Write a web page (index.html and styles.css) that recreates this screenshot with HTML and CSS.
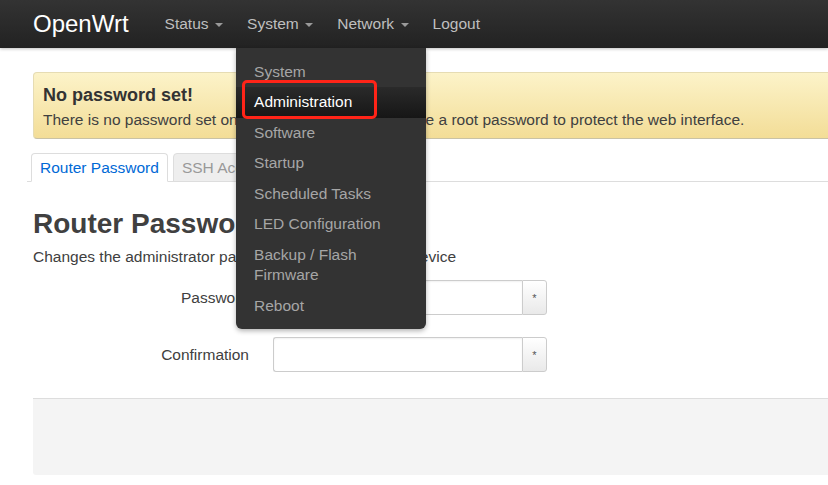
FILE: index.html
```html
<!DOCTYPE html>
<html>
<head>
<meta charset="utf-8">
<title>OpenWrt - Administration</title>
<link rel="stylesheet" href="styles.css">
</head>
<body>
<header class="navbar">
  <a class="brand" href="#">OpenWrt</a>
  <ul class="nav">
    <li class="nav-item"><a href="#">Status<span class="caret"></span></a></li>
    <li class="nav-item open"><a href="#">System<span class="caret"></span></a>
      <ul class="dropdown">
        <li><a href="#">System</a></li>
        <li class="active"><a href="#">Administration</a></li>
        <li><a href="#">Software</a></li>
        <li><a href="#">Startup</a></li>
        <li><a href="#">Scheduled Tasks</a></li>
        <li><a href="#">LED Configuration</a></li>
        <li><a href="#">Backup / Flash Firmware</a></li>
        <li><a href="#">Reboot</a></li>
        <span class="highlight-box"></span>
      </ul>
    </li>
    <li class="nav-item"><a href="#">Network<span class="caret"></span></a></li>
    <li class="nav-item"><a href="#">Logout</a></li>
  </ul>
</header>

<main class="container">
  <div class="alert">
    <h4 class="alert-title">No password set!</h4>
    <p class="alert-text">There is no password set on this router. Please configure a root password to protect the web interface.</p>
  </div>

  <ul class="tabs">
    <li class="tab active"><a href="#">Router Password</a></li>
    <li class="tab"><a href="#">SSH Access</a></li>
    <li class="tab"><a href="#">SSH-Keys</a></li>
  </ul>

  <h2 class="page-title">Router Password</h2>
  <p class="page-desc">Changes the administrator password for accessing the device</p>

  <div class="form">
    <div class="form-row">
      <label class="form-label">Password</label>
      <div class="input-group">
        <input class="input" type="password">
        <span class="addon">*</span>
      </div>
    </div>
    <div class="form-row">
      <label class="form-label">Confirmation</label>
      <div class="input-group">
        <input class="input" type="password">
        <span class="addon">*</span>
      </div>
    </div>
  </div>

  <div class="actions"></div>
</main>
</body>
</html>
```

FILE: styles.css
```css
* { box-sizing: border-box; }

html, body {
  margin: 0;
  padding: 0;
  overflow: hidden;
  background: #fff;
}

body {
  font-family: "Liberation Sans", Arial, sans-serif;
  font-size: 15.5px;
  color: #404040;
  width: 828px;
}

a { text-decoration: none; }
ul { list-style: none; margin: 0; padding: 0; }

/* Navbar */
.navbar {
  height: 48px;
  display: flex;
  align-items: center;
  padding-left: 33px;
  background: linear-gradient(#333 0%, #222 100%);
  box-shadow: 0 1px 3px rgba(0,0,0,.25);
  position: relative;
  z-index: 10;
}

.brand {
  color: #fff;
  font-size: 24px;
  line-height: 48px;
  margin-right: 24px;
}

.nav {
  display: flex;
  height: 48px;
}

.nav-item {
  position: relative;
}

.nav-item > a {
  display: flex;
  align-items: center;
  height: 48px;
  padding: 0 12px;
  color: #bfbfbf;
  font-size: 15.5px;
}

.caret {
  display: inline-block;
  width: 0;
  height: 0;
  margin-left: 6.5px;
  margin-top: 2px;
  border-top: 4px solid #9a9a9a;
  border-left: 4px solid transparent;
  border-right: 4px solid transparent;
}

/* Dropdown */
.dropdown {
  position: absolute;
  top: 48px;
  left: 1px;
  width: 190px;
  padding: 8.5px 0 8px;
  background: #333;
  border-radius: 0 0 6px 6px;
  box-shadow: 0 2px 5px rgba(0,0,0,.3);
}

.dropdown li a {
  display: block;
  padding: 5px 30px 5px 18px;
  line-height: 20.5px;
  color: #a6a6a6;
  font-size: 15.5px;
}

.dropdown li.active a {
  color: #fff;
  background: linear-gradient(#2a2a2a, #161616);
}

.highlight-box {
  position: absolute;
  left: 6px;
  top: 32px;
  width: 135px;
  height: 39px;
  border: 3px solid #ff2418;
  border-radius: 5px;
}

/* Main */
.container {
  padding: 24px 0 0 33px;
  width: 1000px;
}

.alert {
  background: linear-gradient(#fcf3c9, #f3dd97);
  border: 1px solid #e6dcb3;
  border-bottom-color: #c9c2a6;
  border-radius: 4px;
  padding: 11px 9px 8px;
  color: #404040;
}

.alert-title {
  margin: 0 0 3px;
  font-size: 18px;
  line-height: 22px;
  font-weight: bold;
  color: #333;
}

.alert-text {
  margin: 0;
  line-height: 21px;
  color: #404040;
}

/* Tabs */
.tabs {
  display: flex;
  margin: 14px 0 0 -6px;
  padding-left: 4px;
  border-bottom: 1px solid #ddd;
}

.tab {
  margin-right: 5px;
  margin-bottom: -1px;
}

.tab a {
  display: block;
  padding: 0 8px;
  line-height: 27px;
  border: 1px solid #ddd;
  border-radius: 4px 4px 0 0;
  background: #eee;
  color: #999;
}

.tab.active a {
  background: #fff;
  border-bottom-color: #fff;
  color: #0069d6;
}

/* Heading */
.page-title {
  margin: 25px 0 0;
  font-size: 28px;
  line-height: 34px;
  font-weight: bold;
  color: #404040;
}

.page-desc {
  margin: 5px 0 0;
  line-height: 21px;
  color: #404040;
}

/* Form */
.form {
  margin-top: 13px;
  display: flex;
  flex-direction: column;
  gap: 22px;
}

.form-row {
  display: flex;
  align-items: center;
  height: 35px;
}

.form-label {
  width: 216px;
  text-align: right;
  color: #404040;
  margin-right: 24px;
}

.input-group {
  display: flex;
  width: 274px;
  height: 35px;
}

.input {
  flex: 1;
  min-width: 0;
  height: 35px;
  margin: 0;
  border: 1px solid #ccc;
  border-right: none;
  border-radius: 3px 0 0 3px;
  box-shadow: inset 0 1px 2px rgba(0,0,0,.06);
  background: #fff;
}

.addon {
  width: 25px;
  height: 35px;
  display: flex;
  align-items: center;
  justify-content: center;
  border: 1px solid #ccc;
  border-radius: 0 3px 3px 0;
  background: linear-gradient(#fff, #e9e9e9);
  font-size: 11px;
  color: #555;
}

/* Actions bar */
.actions {
  margin-top: 26px;
  height: 77px;
  background: #f4f4f4;
  border-top: 1px solid #ddd;
  border-radius: 0 0 0 3px;
}
```
